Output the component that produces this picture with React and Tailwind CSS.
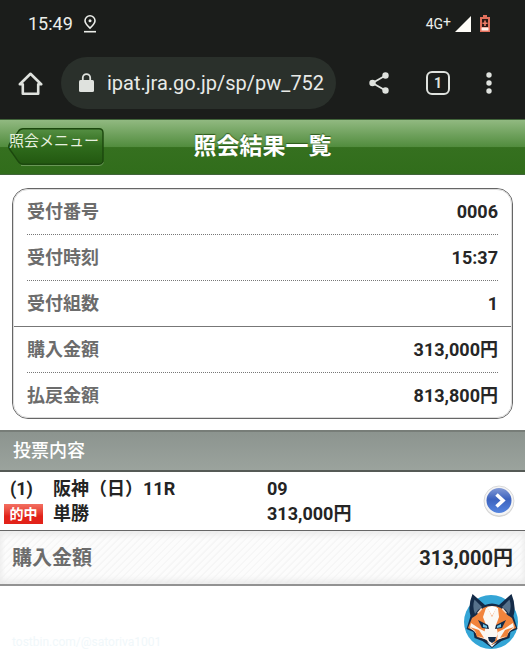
// App.jsx
import React from 'react';

const receiptRows = [
    { label: '受付番号', value: '0006' },
    { label: '受付時刻', value: '15:37' },
    { label: '受付組数', value: '1' },
];

const amountRows = [
    { label: '購入金額', value: '313,000円' },
    { label: '払戻金額', value: '813,800円' },
];

const StatusBar = () => (
    <div className="flex h-12 items-center justify-between pl-7 pr-[34px] text-[#eceeea]">
        <div className="flex items-center gap-2.5">
            <span className="text-lg">15:49</span>
            <svg width="14" height="18" viewBox="0 0 14 18" fill="none" stroke="currentColor" strokeWidth="1.6">
                <path d="M7 13.2C4.2 10.6 2 8.300 2 5.800a5 5 0 0 1 10 0c0 2.500-2.200 4.800-5 7.400z" />
                <circle cx="7" cy="5.800" r="1.500" fill="currentColor" stroke="none" />
                <path d="M1 16.700h12" />
            </svg>
        </div>
        <div className="flex items-center gap-1">
            <span className="flex text-sm leading-5">
                4G<sup className="top-0 text-sm leading-4">+</sup>
            </span>
            <svg width="16" height="16" viewBox="0 0 16 16" fill="#fffdf8">
                <path d="M16 0v16H0z" />
            </svg>
            <svg className="ml-1" width="12" height="18" viewBox="0 0 12 18">
                <path d="M4 0h4v2h3v15H1V2h3z" fill="#e2705c" />
                <path d="M3 4h6v8H3z" fill="#2a1815" />
                <path d="M5.200 5.500h1.600v2h1.800v1.600H6.800v2H5.200v-2H3.400V7.500h1.800z" fill="#ee7d68" />
                <path d="M2.500 12.500h7V15.500h-7z" fill="#fff1ec" />
            </svg>
        </div>
    </div>
);

const BrowserBar = () => (
    <div className="flex items-center pb-2.5 pl-[18px] pr-[33px] pt-[9px] text-[#dfe2de]">
        <button type="button" aria-label="ホーム">
            <svg width="25" height="25" viewBox="0 0 25 25" fill="none" stroke="currentColor" strokeWidth="2.600">
                <path d="M1.800 13.300 12.500 2.800l10.700 10.500h-3v9.500H4.800v-9.500z" strokeLinejoin="round" />
            </svg>
        </button>
        <div className="ml-[18px] flex h-[52px] min-w-0 flex-1 items-center gap-[13px] rounded-full bg-[#2a302b] pl-[18px] pr-2">
            <svg className="shrink-0" width="15" height="20" viewBox="0 0 15 20">
                <rect x="0" y="7" width="15" height="12" rx="1.500" fill="currentColor" />
                <path d="M3.800 8V4.800a3.700 3.700 0 0 1 7.400 0V8" fill="none" stroke="currentColor" strokeWidth="1.800" />
            </svg>
            <input
                type="text"
                readOnly
                aria-label="アドレス"
                value="ipat.jra.go.jp/sp/pw_752"
                className="min-w-0 flex-1 bg-transparent text-xl text-[#e8eae7] outline-none"
            />
        </div>
        <div className="ml-8 flex items-center">
            <button type="button" aria-label="共有">
                <svg width="22" height="24" viewBox="0 0 22 24" fill="currentColor">
                    <path d="M17.500 4.500 4.500 12l13 7.500" fill="none" stroke="currentColor" strokeWidth="1.800" />
                    <circle cx="17.500" cy="4.500" r="3.200" />
                    <circle cx="4.500" cy="12" r="3.200" />
                    <circle cx="17.500" cy="19.500" r="3.200" />
                </svg>
            </button>
            <button
                type="button"
                aria-label="タブ"
                className="ml-9 flex size-6 items-center justify-center rounded-md border-2 border-current text-sm font-bold leading-4"
            >
                1
            </button>
            <button type="button" aria-label="その他" className="ml-9">
                <svg width="6" height="22" viewBox="0 0 6 22" fill="currentColor">
                    <circle cx="3" cy="3" r="2.700" />
                    <circle cx="3" cy="11" r="2.700" />
                    <circle cx="3" cy="19" r="2.700" />
                </svg>
            </button>
        </div>
    </div>
);

const PageHeader = () => (
    <header className="grid h-14 grid-cols-[1fr_auto_1fr] items-center border-y border-[#41643a] bg-[linear-gradient(to_bottom,#91b981_0%,#518c3d_50%,#35701f_51%,#316d1b_100%)] px-2">
        <button type="button" className="relative h-[38px] w-24 text-left">
            <svg className="absolute inset-0" width="96" height="38" viewBox="0 0 96 38">
                <defs>
                    <linearGradient id="back" x1="0" y1="0" x2="0" y2="1">
                        <stop offset="0" stopColor="#558f43" />
                        <stop offset="0.500" stopColor="#2f6b1c" />
                        <stop offset="1" stopColor="#225810" />
                    </linearGradient>
                </defs>
                <path
                    d="M15 .8h76q4 0 4 4v27.400q0 4-4 4H15q-3 0-5-3L1.500 21q-1.500-2.500 0-5L10 3.800q2-3 5-3z"
                    fill="url(#back)"
                    stroke="#1c480e"
                    strokeWidth="1.400"
                />
                <path d="M13 37.500h78q3.500 0 4.500-3" fill="none" stroke="#77a266" strokeWidth="0.800" />
            </svg>
            <span className="relative block h-7 whitespace-nowrap pl-px text-[15px] leading-4 text-[#e6f0df]">
                照会メニュー
            </span>
        </button>
        <h1 className="text-[23px] font-bold leading-8 text-white [text-shadow:0_-1px_1px_#2c5a1b]">照会結果一覧</h1>
    </header>
);

const DetailRow = ({ label, value }) => (
    <div className="flex h-[46px] items-center justify-between border-b border-dotted border-[#777] text-lg font-bold last:h-[45px] last:border-b-0">
        <dt className="text-[#6c6c6c]">{label}</dt>
        <dd className="text-[#262626]">{value}</dd>
    </div>
);

const ReceiptCard = () => (
    <section className="mx-3 mb-[11px] mt-[13px] rounded-2xl border border-[#666] outline outline-[#dcdcdc] -outline-offset-2">
        <dl className="px-3.5">
            {receiptRows.map((row) => (
                <DetailRow key={row.label} label={row.label} value={row.value} />
            ))}
        </dl>
        <dl className="border-t border-[#777] px-3.5">
            {amountRows.map((row) => (
                <DetailRow key={row.label} label={row.label} value={row.value} />
            ))}
        </dl>
    </section>
);

const BetRow = () => (
    <div className="flex items-center pl-1 pr-2.5 text-lg font-bold leading-[25px] text-[#242424]">
        <div className="grid flex-1 grid-cols-[49px_214px_1fr] pb-1 pt-1">
            <span className="pl-1.5">(1)</span>
            <span>阪神（日）11R</span>
            <span>09</span>
            <span className="flex items-center">
                <span className="flex h-5 w-[39px] items-center justify-center bg-linear-to-b from-[#f36e61] to-[#e22219] to-60% text-sm text-white">
                    的中
                </span>
            </span>
            <span>単勝</span>
            <span>313,000円</span>
        </div>
        <button type="button" aria-label="詳細">
            <svg width="32" height="32" viewBox="0 0 32 32">
                <defs>
                    <linearGradient id="go" x1="0" y1="0" x2="0" y2="1">
                        <stop offset="0" stopColor="#8299d5" />
                        <stop offset="0.450" stopColor="#3c62be" />
                        <stop offset="1" stopColor="#5585df" />
                    </linearGradient>
                </defs>
                <circle cx="16" cy="17" r="15" fill="#d5d5d5" />
                <circle cx="16" cy="16" r="15" fill="#f5f5f5" stroke="#d2d2d2" strokeWidth="0.800" />
                <circle cx="16" cy="15.500" r="12.500" fill="url(#go)" />
                <path d="m13.500 9.500 6.500 6-6.500 6" fill="none" stroke="#fff" strokeWidth="3.600" />
            </svg>
        </button>
    </div>
);

const FoxLogo = () => (
    <svg width="56" height="56" viewBox="0 0 56 56">
        <circle cx="28" cy="28" r="27" fill="#34a5d6" />
        {/* head outline with ears */}
        <path d="M9.500 0 22 11q7-3 14 0L48.500 0q5 12 2 22l4 13-7 3-1 6-8 3-9.500 7-9.500-7-8-3-1-6-7-3 4-13q-3-10 2-22z" fill="#142b48" />
        <path d="M11.500 5.500 19 13l-4 3-3 4q-3-7-.5-14.500zM46.500 5.500 39 13l4 3 3 4q3-7 .5-14.500z" fill="#56718b" />
        <path d="m14 19 4-5 5 3-5 5zM44 19l-4-5-5 3 5 5z" fill="#f5d9c4" />
        {/* fur */}
        <path d="M9 24q8-5 11-10 4-2 9-2t9 2q3 5 11 10l4 10-7 3-2 6-8 2-7 6-7-6-8-2-2-6-7-3z" fill="#f2843c" />
        <path d="m24 13 5-1 5 1-5 9z" fill="#fff" />
        <path d="M23 14h2l4 9 4-9h2l1 9-3 8 2 9-4 8-3 3-3-3-4-8 2-9-3-8z" fill="#fbf8f4" />
        <path d="m8 29 9 6 6 3 1 8-8-3-5-6-4-3zM50 29l-9 6-6 3-1 8 8-3 5-6 4-3z" fill="#fbf8f4" />
        <path d="m7 33 9 3 5 8-7-2-2-5zM51 33l-9 3-5 8 7-2 2-5z" fill="#f2843c" />
        {/* eyes and nose */}
        <path d="m15 26 10 5 1 4-7-1zM43 26l-10 5-1 4 7-1z" fill="#142b48" />
        <path d="m20 30 4 2v2l-4-1zM38 30l-4 2v2l4-1z" fill="#6cc3e6" />
        <path d="M25 43h8l-1 4-3 2-3-2z" fill="#142b48" />
        <path d="m24 48 5 3 5-3-5 5z" fill="#fff" />
    </svg>
);

const App = () => {
    return (
        <div className="bg-white font-[Roboto,'Noto_Sans_CJK_JP',sans-serif]">
            <div className="bg-[#1b1d1b]">
                <StatusBar />
                <BrowserBar />
            </div>
            <PageHeader />
            <main>
                <ReceiptCard />
                <h2 className="h-[42px] border-y-2 border-t-[#777d78] border-b-[#555a56] bg-linear-to-b from-[#8c948f] to-[#9ba39d] px-[13px] text-lg font-medium leading-[38px] text-white">
                    投票内容
                </h2>
                <BetRow />
                <div className="flex h-14 items-center justify-between border-b-2 border-t border-b-[#929292] border-t-[#666] bg-[repeating-linear-gradient(135deg,#fcfcfc_0px,#fcfcfc_3px,#f6f6f6_4px,#f6f6f6_5px)] px-3 text-xl font-bold shadow-[inset_0_4px_6px_#ebebeb,inset_0_-4px_6px_#ebebeb]">
                    <span className="text-[#6c6c6c]">購入金額</span>
                    <span className="text-[#262626]">313,000円</span>
                </div>
            </main>
            <footer className="flex items-end justify-between pl-3 pr-1.5 pt-2">
                <span className="text-xs text-[#f0f7fa]">tostbin.com/@satoriva1001</span>
                <FoxLogo />
            </footer>
        </div>
    );
};

export default App;
